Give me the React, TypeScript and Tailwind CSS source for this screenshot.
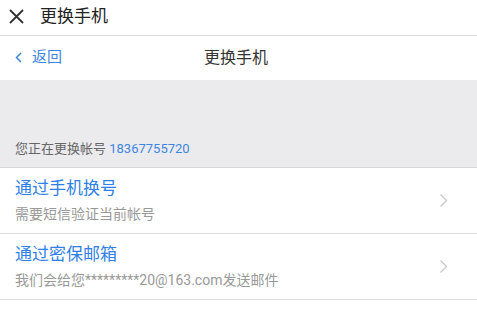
import React from "react";

const font = { fontFamily: 'Roboto, "Noto Sans CJK SC", sans-serif' };

function Chevron() {
  return (
    <svg width="9" height="15" viewBox="0 0 9 15" fill="none">
      <path d="M1.5 1.5L7.5 7.5L1.5 13.5" stroke="#c8c8c8" strokeWidth="1.3" />
    </svg>
  );
}

export default function App() {
  return (
    <div className="w-[477px] h-[309px] overflow-hidden bg-white" style={font}>
      <div className="h-[36px] flex items-center border-b border-[#d9d9d9] pb-[3px]">
        <svg className="ml-[9px]" width="15" height="15" viewBox="0 0 15 15">
          <path d="M1 1L14 14M14 1L1 14" stroke="#333" strokeWidth="1.8" />
        </svg>
        <span className="ml-[16px] text-[17px] text-[#222] leading-none">更换手机</span>
      </div>
      <div className="h-[44px] flex items-center relative bg-white pb-[1px]">
        <div className="flex items-center ml-[15px] text-[#3b86e3]">
          <svg width="7" height="11" viewBox="0 0 7 11">
            <path d="M6 1L1.5 5.5L6 10" stroke="#3b86e3" strokeWidth="1.5" fill="none" />
          </svg>
          <span className="ml-[10px] text-[15px] leading-none">返回</span>
        </div>
        <span className="absolute left-[204px] text-[16px] text-[#333] leading-none">更换手机</span>
      </div>
      <div className="h-[88px] bg-[#ebebed] border-b border-[#d6d6d6] flex items-end pb-[12px] pl-[15px]">
        <span className="text-[13px] text-[#666] leading-none">
          您正在更换帐号 <span className="text-[#3b86e3]">18367755720</span>
        </span>
      </div>
      <div className="h-[66px] flex items-center border-b border-[#dcdcdc] pl-[15px] pr-[29px] pb-[1px]">
        <div className="flex-1 flex flex-col">
          <span className="text-[17px] text-[#2f80e6] leading-none">通过手机换号</span>
          <span className="text-[14px] text-[#999] leading-none mt-[10px]">需要短信验证当前帐号</span>
        </div>
        <Chevron />
      </div>
      <div className="h-[66px] flex items-center border-b border-[#dcdcdc] pl-[15px] pr-[29px] pb-[1px]">
        <div className="flex-1 flex flex-col">
          <span className="text-[17px] text-[#2f80e6] leading-none">通过密保邮箱</span>
          <span className="text-[14px] text-[#999] leading-none mt-[10px]">我们会给您*********20@163.com发送邮件</span>
        </div>
        <Chevron />
      </div>
    </div>
  );
}
